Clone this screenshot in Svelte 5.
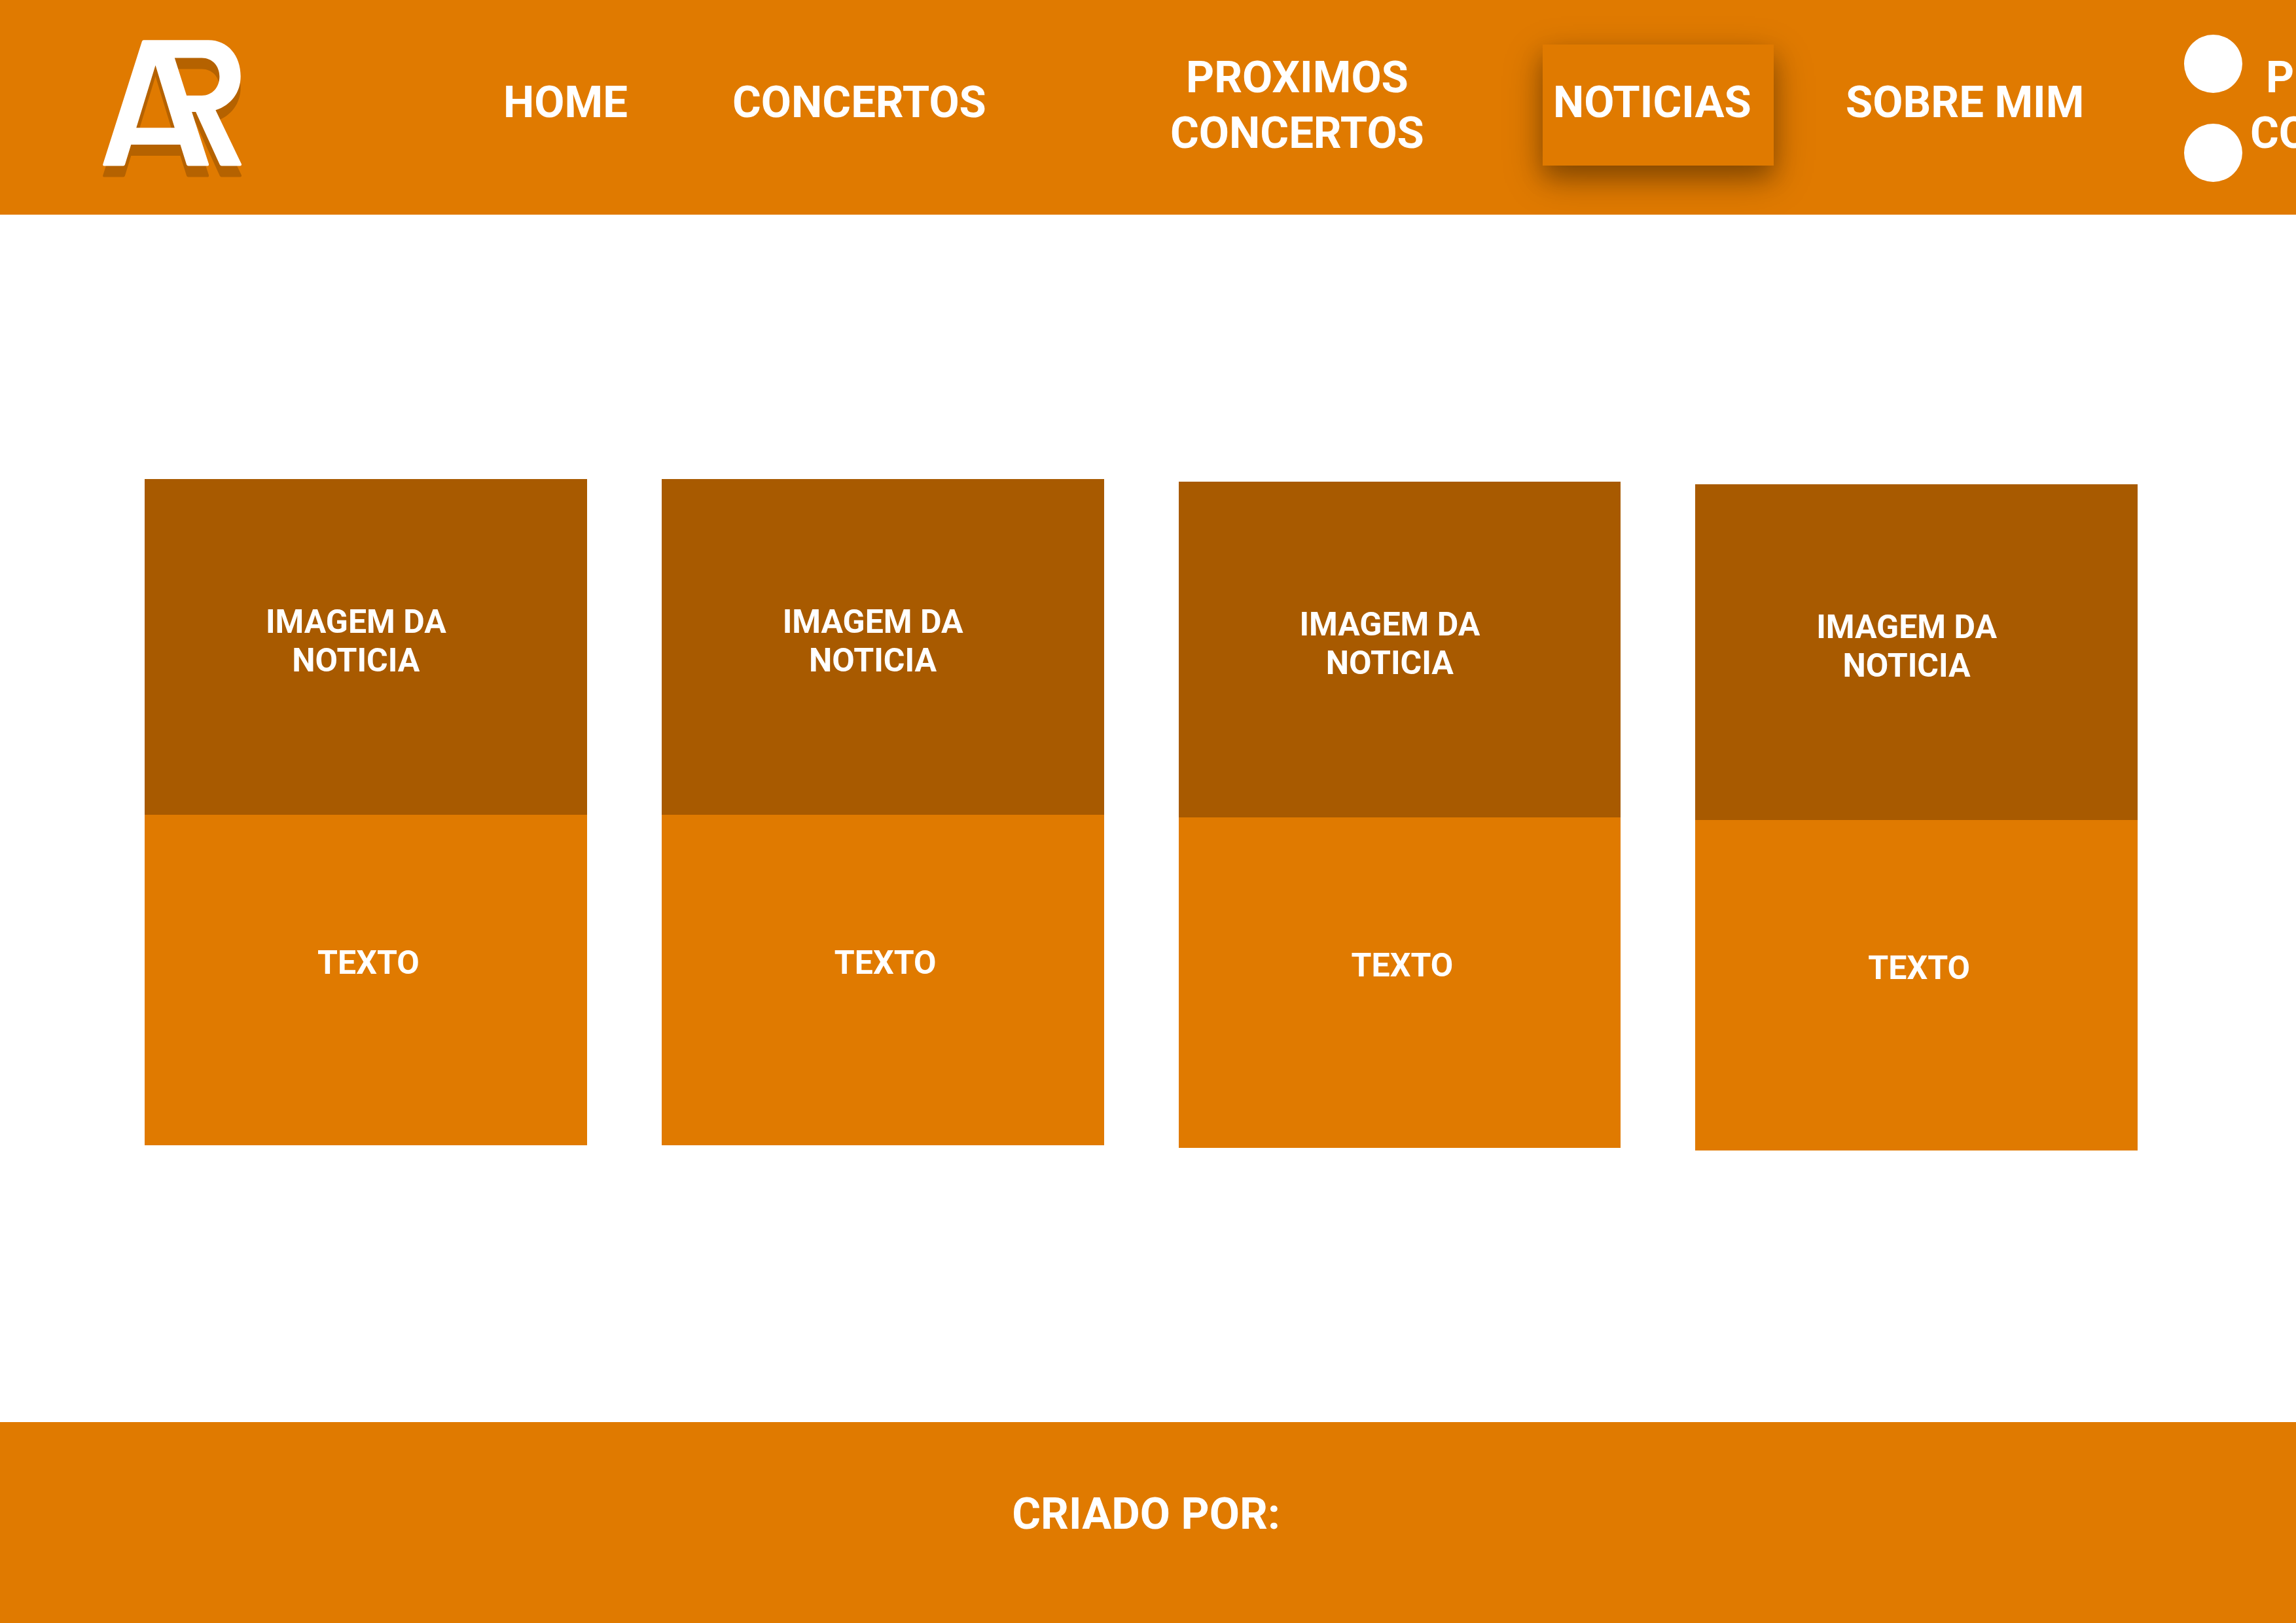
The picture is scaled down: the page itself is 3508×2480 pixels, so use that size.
<script>
  const news = [
    { id: 1, step: '' },
    { id: 2, step: '' },
    { id: 3, step: 'step-1' },
    { id: 4, step: 'step-2' }
  ];
  const mark =
    'M298 90H595C685 90 743 162 743 256C743 330 700 388 628 412L747 660Q748 668 741 668H656Q650 668 647 662L537 420H519L597 660Q598 668 592 668H503Q497 668 495 663L466 570H240L212 662Q210 668 204 668H115Q109 668 111 660L290 96Q292 90 298 90ZM352 206L264 493H440ZM440 172L495 345H565C612 345 646 308 646 258C646 208 612 172 565 172Z';
</script>

<div class="page">
  <header>
    <a class="logo" href="#home" aria-label="AR">
      <svg viewBox="110 90 637 630" aria-hidden="true">
        <path class="mark-shadow" d={mark} transform="translate(0 51)" />
        <path class="mark" d={mark} />
      </svg>
    </a>
    <nav>
      <a href="#home">HOME</a>
      <a href="#concertos">CONCERTOS</a>
      <a class="double" href="#proximos">PROXIMOS<br />CONCERTOS</a>
      <a class="current" href="#noticias" aria-current="page">NOTICIAS</a>
      <a href="#sobre">SOBRE MIM</a>
      <div class="dots" aria-hidden="true"><span></span><span></span></div>
      <a class="double" href="#proximos">PROXIMOS<br />CONCERTOS</a>
    </nav>
  </header>

  <main>
    {#each news as item (item.id)}
      <article class={item.step}>
        <div class="image"><p>IMAGEM DA<br />NOTICIA</p></div>
        <div class="text"><p>TEXTO</p></div>
      </article>
    {/each}
  </main>

  <footer><p>CRIADO POR:</p></footer>
</div>

<style>
  :global(body) {
    margin: 0;
    background: #fff;
  }
  .page {
    display: flex;
    flex-direction: column;
    min-height: 100vh;
    font-family: Roboto, 'Liberation Sans', sans-serif;
    font-size: 67px;
    font-weight: 700;
    line-height: 85px;
    color: #fff;
  }
  p {
    margin: 0;
  }
  header {
    display: grid;
    grid-template-columns: 612fr 2739fr;
    align-items: center;
    box-sizing: border-box;
    min-height: 328px;
    padding: 52px 0 49px 157px;
    overflow: hidden;
    background: #e07a00;
  }
  .logo svg {
    display: block;
    width: 212px;
    height: 210px;
  }
  .mark {
    fill: #fff;
    fill-rule: evenodd;
  }
  .mark-shadow {
    fill: #b56200;
    fill-rule: evenodd;
  }
  nav {
    display: grid;
    grid-template-columns: 350fr 669fr 569fr 463fr 517fr 101fr 70fr;
    align-items: center;
    min-width: 0;
  }
  nav > * {
    justify-self: start;
    min-width: 0;
  }
  nav a {
    padding-bottom: 18px;
    color: inherit;
    text-decoration: none;
    white-space: nowrap;
  }
  nav .double {
    padding-bottom: 10px;
    text-align: center;
  }
  nav .current {
    margin-bottom: 10px;
    padding: 46px 34px 54px 16px;
    background: #e07a00;
    box-shadow:
      0 20px 56px rgba(0, 0, 0, 0.28),
      0 18px 32px rgba(0, 0, 0, 0.22);
  }
  .dots {
    display: grid;
    gap: 47px;
  }
  .dots span {
    width: 89px;
    height: 89px;
    border-radius: 50%;
    background: #fff;
  }
  main {
    flex: 1;
    display: grid;
    grid-template-columns: repeat(4, 1fr);
    align-items: start;
    gap: 114px;
    padding: 404px 242px 400px 221px;
    font-size: 50px;
    line-height: 59px;
    text-align: center;
  }
  .step-1 {
    margin-top: 4px;
  }
  .step-2 {
    margin-top: 8px;
  }
  .image,
  .text {
    display: grid;
    place-items: center;
    box-sizing: border-box;
  }
  .image {
    min-height: 513px;
    padding: 0 30px 18px 0;
    background: #a85a00;
  }
  .text {
    min-height: 505px;
    padding: 0 0 52px 8px;
    background: #e07a00;
  }
  footer {
    box-sizing: border-box;
    min-height: 307px;
    padding: 98px 6px 124px 0;
    background: #e07a00;
    text-align: center;
  }
</style>
